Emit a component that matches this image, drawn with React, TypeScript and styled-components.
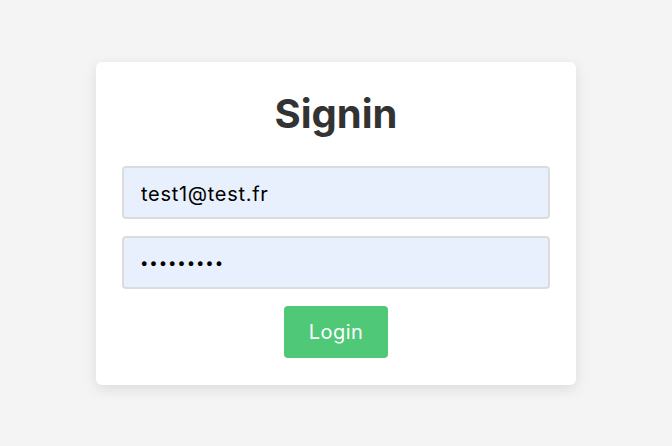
import React from "react";
import styled, { createGlobalStyle } from "styled-components";

const Global = createGlobalStyle`
  html, body { margin: 0; padding: 0; }
  body {
    background: #f4f4f4;
    font-family: Inter, "Noto Sans", sans-serif;
    color: #333;
  }
  * { box-sizing: border-box; }
`;

const Page = styled.div`
  width: 672px;
  height: 446px;
  display: flex;
  align-items: center;
  justify-content: center;
`;

const Card = styled.form`
  width: 480px;
  background: #fff;
  border-radius: 6px;
  box-shadow: 0 4px 14px rgba(0, 0, 0, 0.1);
  padding: 28px 26px 27px;
  display: flex;
  flex-direction: column;
  align-items: center;
`;

const Title = styled.h1`
  margin: 0 0 28px;
  font-size: 40px;
  line-height: 48px;
  font-weight: 700;
  color: #333;
`;

const Field = styled.input<{ $secret?: boolean }>`
  width: 100%;
  height: 53px;
  margin: 0 0 17px;
  padding: ${(p) => (p.$secret ? "0 16px 0 16px" : "3px 16px 0 17px")};
  border: 2px solid #dcdcdc;
  border-radius: 4px;
  background: #e8f0fe;
  font-family: Inter, "Noto Sans", sans-serif;
  font-size: ${(p) => (p.$secret ? "15px" : "20px")};
  letter-spacing: ${(p) => (p.$secret ? "0.9px" : "0.7px")};
  color: #000;
  outline: none;
`;

const Button = styled.button`
  height: 52px;
  padding: 0 25px;
  border: none;
  border-radius: 4px;
  background: #4fc878;
  color: #fff;
  font-family: Inter, "Noto Sans", sans-serif;
  font-size: 20px;
  letter-spacing: 0.5px;
  cursor: pointer;
`;

export default function App() {
  return (
    <>
      <Global />
      <Page>
        <Card onSubmit={(e) => e.preventDefault()}>
          <Title>Signin</Title>
          <Field type="email" defaultValue="test1@test.fr" />
          <Field $secret type="password" defaultValue="123456789" />
          <Button type="submit">Login</Button>
        </Card>
      </Page>
    </>
  );
}
